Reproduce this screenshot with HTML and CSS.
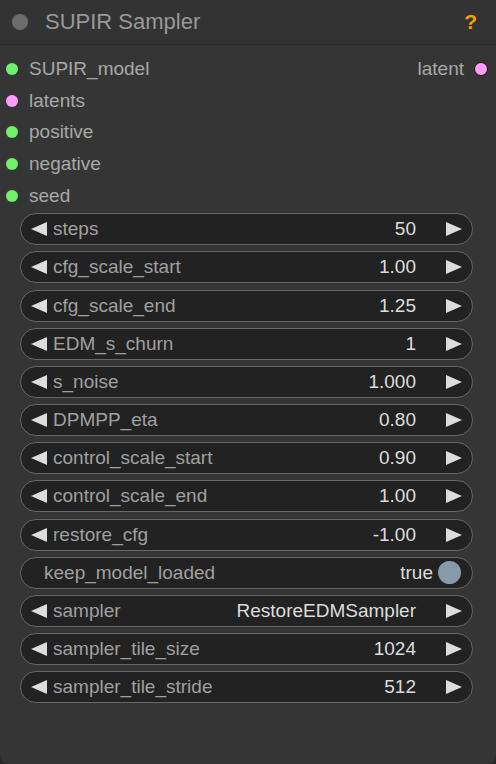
FILE: index.html
```html
<!DOCTYPE html>
<html>
<head>
<meta charset="utf-8">
<link rel="stylesheet" href="styles.css">
</head>
<body>
<div class="node">
  <div class="title">
    <span class="title-dot"></span>
    <span class="title-text">SUPIR Sampler</span>
    <span class="help">?</span>
  </div>
  <div class="slots">
    <div class="slot-row">
      <div class="slot in"><span class="dot green"></span>SUPIR_model</div>
      <div class="slot out">latent<span class="dot pink outlined"></span></div>
    </div>
    <div class="slot-row"><div class="slot in"><span class="dot pink"></span>latents</div></div>
    <div class="slot-row"><div class="slot in"><span class="dot green"></span>positive</div></div>
    <div class="slot-row"><div class="slot in"><span class="dot green"></span>negative</div></div>
    <div class="slot-row"><div class="slot in"><span class="dot green"></span>seed</div></div>
  </div>
  <div class="widgets">
    <div class="widget"><svg class="arr" viewBox="0 0 16 14"><path d="M0 7L16 0V14Z"/></svg><span class="label">steps</span><span class="value">50</span><svg class="arr r" viewBox="0 0 16 14"><path d="M16 7L0 0V14Z"/></svg></div>
    <div class="widget"><svg class="arr" viewBox="0 0 16 14"><path d="M0 7L16 0V14Z"/></svg><span class="label">cfg_scale_start</span><span class="value">1.00</span><svg class="arr r" viewBox="0 0 16 14"><path d="M16 7L0 0V14Z"/></svg></div>
    <div class="widget"><svg class="arr" viewBox="0 0 16 14"><path d="M0 7L16 0V14Z"/></svg><span class="label">cfg_scale_end</span><span class="value">1.25</span><svg class="arr r" viewBox="0 0 16 14"><path d="M16 7L0 0V14Z"/></svg></div>
    <div class="widget"><svg class="arr" viewBox="0 0 16 14"><path d="M0 7L16 0V14Z"/></svg><span class="label">EDM_s_churn</span><span class="value">1</span><svg class="arr r" viewBox="0 0 16 14"><path d="M16 7L0 0V14Z"/></svg></div>
    <div class="widget"><svg class="arr" viewBox="0 0 16 14"><path d="M0 7L16 0V14Z"/></svg><span class="label">s_noise</span><span class="value">1.000</span><svg class="arr r" viewBox="0 0 16 14"><path d="M16 7L0 0V14Z"/></svg></div>
    <div class="widget"><svg class="arr" viewBox="0 0 16 14"><path d="M0 7L16 0V14Z"/></svg><span class="label">DPMPP_eta</span><span class="value">0.80</span><svg class="arr r" viewBox="0 0 16 14"><path d="M16 7L0 0V14Z"/></svg></div>
    <div class="widget"><svg class="arr" viewBox="0 0 16 14"><path d="M0 7L16 0V14Z"/></svg><span class="label">control_scale_start</span><span class="value">0.90</span><svg class="arr r" viewBox="0 0 16 14"><path d="M16 7L0 0V14Z"/></svg></div>
    <div class="widget"><svg class="arr" viewBox="0 0 16 14"><path d="M0 7L16 0V14Z"/></svg><span class="label">control_scale_end</span><span class="value">1.00</span><svg class="arr r" viewBox="0 0 16 14"><path d="M16 7L0 0V14Z"/></svg></div>
    <div class="widget"><svg class="arr" viewBox="0 0 16 14"><path d="M0 7L16 0V14Z"/></svg><span class="label">restore_cfg</span><span class="value">-1.00</span><svg class="arr r" viewBox="0 0 16 14"><path d="M16 7L0 0V14Z"/></svg></div>
    <div class="widget toggle"><span class="label">keep_model_loaded</span><span class="value">true</span><span class="knob"></span></div>
    <div class="widget"><svg class="arr" viewBox="0 0 16 14"><path d="M0 7L16 0V14Z"/></svg><span class="label">sampler</span><span class="value">RestoreEDMSampler</span><svg class="arr r" viewBox="0 0 16 14"><path d="M16 7L0 0V14Z"/></svg></div>
    <div class="widget"><svg class="arr" viewBox="0 0 16 14"><path d="M0 7L16 0V14Z"/></svg><span class="label">sampler_tile_size</span><span class="value">1024</span><svg class="arr r" viewBox="0 0 16 14"><path d="M16 7L0 0V14Z"/></svg></div>
    <div class="widget"><svg class="arr" viewBox="0 0 16 14"><path d="M0 7L16 0V14Z"/></svg><span class="label">sampler_tile_stride</span><span class="value">512</span><svg class="arr r" viewBox="0 0 16 14"><path d="M16 7L0 0V14Z"/></svg></div>
  </div>
</div>
</body>
</html>
```
FILE: styles.css
```css
* { box-sizing: border-box; }
html, body {
  margin: 0;
  padding: 0;
  background: #2a2520;
}
body {
  width: 496px;
  height: 764px;
  overflow: hidden;
  font-family: "Liberation Sans", Arial, sans-serif;
}
.node {
  width: 496px;
  height: 764px;
  background: #353535;
  border-radius: 0 0 8px 8px;
}
.title {
  height: 45px;
  background: #333333;
  border-bottom: 1px solid #292929;
  display: flex;
  align-items: center;
  padding: 0 19px 0 12px;
}
.title-dot {
  width: 16px;
  height: 16px;
  border-radius: 50%;
  background: #6c6c6c;
  flex: none;
}
.title-text {
  margin-left: 17px;
  font-size: 22px;
  color: #999999;
  flex: 1;
}
.help {
  color: #f0a000;
  font-weight: bold;
  font-size: 21px;
}
.slots {
  padding-top: 8px;
}
.slot-row {
  height: 31.75px;
  display: flex;
  align-items: center;
  justify-content: space-between;
}
.slot {
  display: flex;
  align-items: center;
  font-size: 19px;
  color: #a8a8a8;
}
.slot.in .dot { margin: 0 11px 0 6px; }
.slot.out .dot { margin: 0 8px 0 10px; }
.dot {
  width: 12px;
  height: 12px;
  border-radius: 50%;
  flex: none;
}
.green { background: #70f070; }
.pink { background: #ff9cf9; }
.outlined {
  width: 14px;
  height: 14px;
  border: 1.5px solid #111;
}
.widgets {
  padding: 1.5px 23px 0 20px;
  display: flex;
  flex-direction: column;
  gap: 6.17px;
}
.widget {
  height: 32px;
  border: 1.5px solid #676767;
  background: #222222;
  border-radius: 16px;
  display: flex;
  align-items: center;
  padding: 0 10px 0 10px;
  font-size: 19px;
}
.arr {
  width: 16px;
  height: 14px;
  fill: #dddddd;
  flex: none;
}
.label {
  color: #a0a0a0;
  margin-left: 6px;
  flex: 1;
  white-space: nowrap;
}
.value {
  color: #dddddd;
  white-space: nowrap;
}
.arr.r { margin-left: 30px; }
.toggle { padding: 0 11px 0 23px; }
.toggle .label { margin-left: 0; }
.knob {
  width: 23px;
  height: 23px;
  border-radius: 50%;
  background: #8899aa;
  margin-left: 5px;
  flex: none;
}
```
